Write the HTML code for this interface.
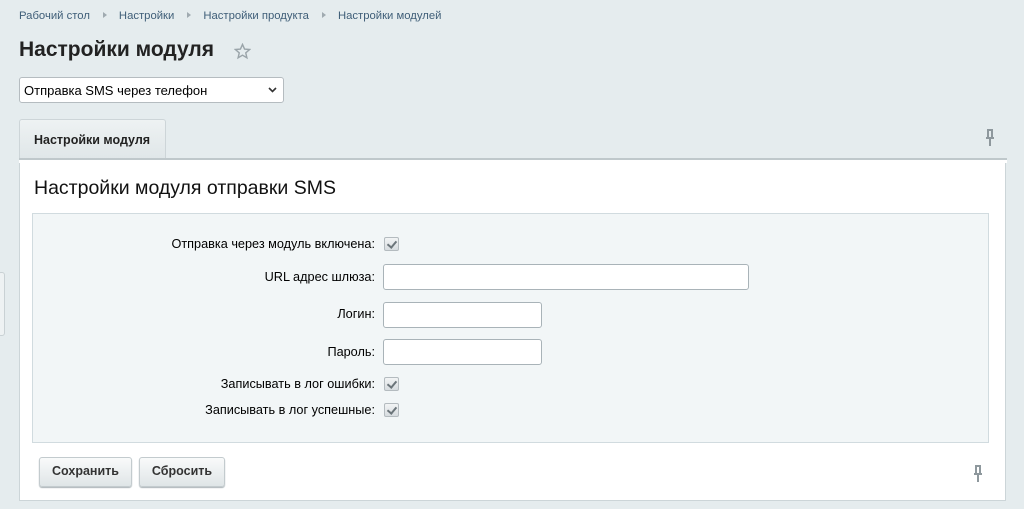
<!DOCTYPE html>
<html><head><meta charset="utf-8"><style>
*{box-sizing:border-box}
body{margin:0;width:1024px;height:509px;background:#e5ecee;font-family:"Liberation Sans",Arial,sans-serif;position:relative;overflow:hidden;color:#000}
.a{position:absolute}
.bc{top:10px;left:19px;font-size:11.3px;color:#3f5e78}
.bc span.s{display:inline-block;width:0;height:0;border-left:4px solid #a0aab0;border-top:3px solid transparent;border-bottom:3px solid transparent;margin:0 12px 1px 13px}
h1{position:absolute;left:19px;top:38px;margin:0;font-size:21px;font-weight:bold;color:#222}
.sel{left:19px;top:77px;width:265px;height:26px;background:#fff;border:1px solid #b5bcc0;border-radius:3px;font-size:13px;padding:5px 4px}
.tab{left:19px;top:119px;width:147px;height:41px;background:linear-gradient(#eef2f3,#dfe6e8);border:1px solid #cdd5d8;border-bottom:none;border-radius:3px 3px 0 0;font-size:12.5px;font-weight:bold;padding:13px 0 0 14px;color:#222}
.line{left:19px;top:158px;width:988px;height:5px;background:#fff;border-top:2px solid #bfc8cb}
.panel{left:19px;top:163px;width:987px;height:338px;background:#fff;border:1px solid #ccd5d8;border-top:none}
.ptitle{left:34px;top:177px;font-size:19.5px;color:#111}
.inner{left:32px;top:213px;width:957px;height:230px;background:#f2f6f7;border:1px solid #d1dbdf}
.lab{right:649px;font-size:12.7px;color:#000;text-align:right}
.cb{left:384px;width:15px;height:14px;border:1px solid #b4bbbf;border-radius:2px;background:linear-gradient(#f2f4f5,#d7dcdf)}
.cb:after{content:"";position:absolute;left:4px;top:1px;width:4px;height:7px;border:solid #6b757a;border-width:0 2px 2px 0;transform:rotate(40deg)}
.in{left:383px;height:26px;background:#fff;border:1px solid #a9b3b8;border-radius:3px}
.btn{top:457px;height:30px;border:1px solid #c3cbce;border-radius:3px;background:linear-gradient(#f9fafa,#dfe5e7);box-shadow:0 1px 1px #aab3b7;font-size:12.5px;font-weight:bold;color:#333;text-align:center;line-height:27px}
.pin{width:12px;height:18px}
</style></head><body>
<div class="a bc">Рабочий стол<span class="s"></span>Настройки<span class="s"></span>Настройки продукта<span class="s"></span>Настройки модулей</div>
<h1>Настройки модуля</h1>
<svg class="a" style="left:234px;top:43px" width="17" height="17" viewBox="0 0 24 24"><path d="M12 2l2.9 6.6 7.1.6-5.4 4.7 1.6 7-6.2-3.7-6.2 3.7 1.6-7L2 9.2l7.1-.6z" fill="none" stroke="#9aa4a9" stroke-width="2"/></svg>
<div class="a sel">Отправка SMS через телефон<svg class="a" style="right:6px;top:9px" width="9" height="6"><path d="M1 1l3.5 3.5L8 1" fill="none" stroke="#333" stroke-width="1.6"/></svg></div>
<div class="a tab">Настройки модуля</div>
<svg class="a pin" style="left:984px;top:129px" viewBox="0 0 12 18"><path d="M3 1h6M4 1v7M8 1v7M2 9h8M6 9v8" stroke="#8e989d" stroke-width="2" fill="none"/></svg>
<div class="a panel"></div>
<div class="a line"></div>
<div class="a ptitle">Настройки модуля отправки SMS</div>
<div class="a inner"></div>
<div class="a lab" style="top:237px">Отправка через модуль включена:</div>
<div class="a cb" style="top:237px"></div>
<div class="a lab" style="top:270px">URL адрес шлюза:</div>
<div class="a in" style="top:264px;width:366px"></div>
<div class="a lab" style="top:307px">Логин:</div>
<div class="a in" style="top:302px;width:159px"></div>
<div class="a lab" style="top:345px">Пароль:</div>
<div class="a in" style="top:339px;width:159px"></div>
<div class="a lab" style="top:377px">Записывать в лог ошибки:</div>
<div class="a cb" style="top:377px"></div>
<div class="a lab" style="top:403px">Записывать в лог успешные:</div>
<div class="a cb" style="top:403px"></div>
<div class="a btn" style="left:39px;width:93px">Сохранить</div>
<div class="a btn" style="left:139px;width:86px">Сбросить</div>
<svg class="a pin" style="left:972px;top:465px" viewBox="0 0 12 18"><path d="M3 1h6M4 1v7M8 1v7M2 9h8M6 9v8" stroke="#8e989d" stroke-width="2" fill="none"/></svg>
<div class="a" style="left:-2px;top:272px;width:7px;height:64px;border:1px solid #c9d1d4;border-radius:3px;background:#eef2f3"></div>
</body></html>
